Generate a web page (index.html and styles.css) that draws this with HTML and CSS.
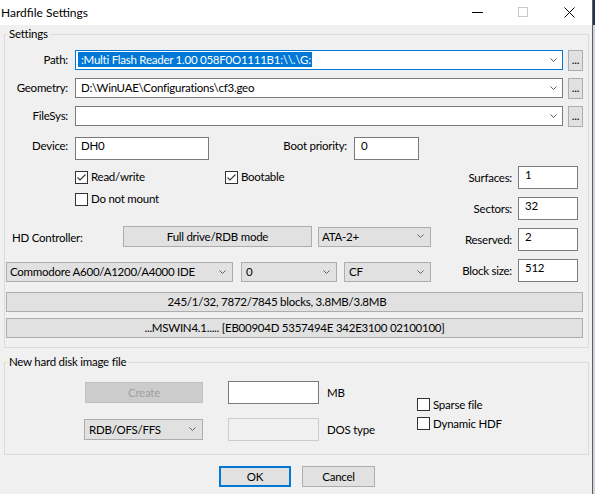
FILE: index.html
```html
<!DOCTYPE html>
<html lang="en">

<head>
  <meta charset="utf-8">
  <title>Hardfile Settings</title>
  <link rel="stylesheet" href="styles.css">
</head>

<body>
  <div class="window">
    <div class="titlebar">
      <span class="title">Hardfile Settings</span>
      <div class="caption">
        <span class="cap">
          <svg width="11" height="11" viewBox="0 0 11 11"><path d="M0 5.5h11" stroke="#000" stroke-width="1" /></svg>
        </span>
        <span class="cap">
          <svg width="11" height="11" viewBox="0 0 11 11"><rect x="0.5" y="0.5" width="9" height="9" fill="none" stroke="#c8c8c8" /></svg>
        </span>
        <span class="cap">
          <svg width="11" height="11" viewBox="0 0 11 11"><path d="M0.5 0.5l10 10M10.5 0.5l-10 10" stroke="#000" stroke-width="1" /></svg>
        </span>
      </div>
    </div>

    <div class="client">
      <!-- Settings -->
      <fieldset class="group group-settings">
        <legend>Settings</legend>

        <div class="row file-row">
          <span class="lbl">Path:</span>
          <div class="combo combo-edit focused">
            <span class="val"><span class="sel">:Multi Flash Reader 1.00 058F0O1111B1:\\.\G:</span></span>
            <svg class="chev" width="7" height="5" viewBox="0 0 7 5"><path d="M0.5 0.5L3.5 3.5L6.5 0.5" fill="none" stroke="#606060" /></svg>
          </div>
          <span class="btn dots">...</span>
        </div>
        <div class="row file-row">
          <span class="lbl">Geometry:</span>
          <div class="combo combo-edit">
            <span class="val">D:\WinUAE\Configurations\cf3.geo</span>
            <svg class="chev" width="7" height="5" viewBox="0 0 7 5"><path d="M0.5 0.5L3.5 3.5L6.5 0.5" fill="none" stroke="#606060" /></svg>
          </div>
          <span class="btn dots">...</span>
        </div>
        <div class="row file-row">
          <span class="lbl">FileSys:</span>
          <div class="combo combo-edit">
            <span class="val"></span>
            <svg class="chev" width="7" height="5" viewBox="0 0 7 5"><path d="M0.5 0.5L3.5 3.5L6.5 0.5" fill="none" stroke="#606060" /></svg>
          </div>
          <span class="btn dots">...</span>
        </div>

        <div class="row device-row">
          <span class="lbl">Device:</span>
          <span class="edit edit-device">DH0</span>
          <span class="lbl lbl-boot">Boot priority:</span>
          <span class="edit edit-boot">0</span>
        </div>

        <div class="middle">
          <div class="left-col">
            <div class="check-row">
              <span class="check check-first"><span class="box on"></span>Read/write</span>
              <span class="check"><span class="box on"></span>Bootable</span>
            </div>
            <div class="check-row">
              <span class="check"><span class="box"></span>Do not mount</span>
            </div>
            <div class="row hd-row">
              <span class="lbl-hd">HD Controller:</span>
              <span class="btn btn-rdb">Full drive/RDB mode</span>
              <div class="combo combo-drop combo-ata">
                <span class="val">ATA-2+</span>
                <svg class="chev" width="7" height="5" viewBox="0 0 7 5"><path d="M0.5 0.5L3.5 3.5L6.5 0.5" fill="none" stroke="#606060" /></svg>
              </div>
            </div>
            <div class="row ctrl-row">
              <div class="combo combo-drop combo-cbm">
                <span class="val">Commodore A600/A1200/A4000 IDE</span>
                <svg class="chev" width="7" height="5" viewBox="0 0 7 5"><path d="M0.5 0.5L3.5 3.5L6.5 0.5" fill="none" stroke="#606060" /></svg>
              </div>
              <div class="combo combo-drop combo-unit">
                <span class="val">0</span>
                <svg class="chev" width="7" height="5" viewBox="0 0 7 5"><path d="M0.5 0.5L3.5 3.5L6.5 0.5" fill="none" stroke="#606060" /></svg>
              </div>
              <div class="combo combo-drop combo-type">
                <span class="val">CF</span>
                <svg class="chev" width="7" height="5" viewBox="0 0 7 5"><path d="M0.5 0.5L3.5 3.5L6.5 0.5" fill="none" stroke="#606060" /></svg>
              </div>
            </div>
          </div>

          <div class="geo-col">
            <span class="lbl-geo">Surfaces:</span><span class="edit">1</span>
            <span class="lbl-geo">Sectors:</span><span class="edit">32</span>
            <span class="lbl-geo">Reserved:</span><span class="edit">2</span>
            <span class="lbl-geo">Block size:</span><span class="edit">512</span>
          </div>
        </div>

        <div class="info info-first">245/1/32, 7872/7845 blocks, 3.8MB/3.8MB</div>
        <div class="info">...MSWIN4.1..... [EB00904D 5357494E 342E3100 02100100]</div>
      </fieldset>

      <!-- New hard disk image file -->
      <fieldset class="group group-new">
        <legend>New hard disk image file</legend>
        <div class="new-grid">
          <span class="btn btn-create">Create</span>
          <span class="edit edit-size"></span>
          <span class="lbl-unit">MB</span>
          <div class="new-checks">
            <span class="check"><span class="box"></span>Sparse file</span>
            <span class="check"><span class="box"></span>Dynamic HDF</span>
          </div>
          <div class="combo combo-drop combo-fs">
            <span class="val">RDB/OFS/FFS</span>
            <svg class="chev" width="7" height="5" viewBox="0 0 7 5"><path d="M0.5 0.5L3.5 3.5L6.5 0.5" fill="none" stroke="#606060" /></svg>
          </div>
          <span class="edit edit-off"></span>
          <span class="lbl-unit">DOS type</span>
        </div>
      </fieldset>

      <div class="actions">
        <span class="btn btn-ok">OK</span>
        <span class="btn btn-cancel">Cancel</span>
      </div>
    </div>
  </div>
</body>

</html>
```

FILE: styles.css
```css
* {
  box-sizing: border-box;
}

body {
  margin: 0;
  background: linear-gradient(#1d3557 0 25px, #cdd4de 25px);
  font-family: Lato, "Noto Sans", sans-serif;
  font-size: 11.5px;
  letter-spacing: -0.25px;
  line-height: 16px;
  color: #000;
}

.window {
  width: 593px;
  height: 494px;
  background: #f0f0f0;
  border-right: 1px solid #5e5e5e;
  overflow: hidden;
}

/* title bar */
.titlebar {
  height: 25px;
  background: #fff;
  display: flex;
  align-items: center;
}

.title {
  flex: 1;
  padding-left: 1px;
  font-size: 12px;
  letter-spacing: 0;
}

.caption {
  display: flex;
  height: 100%;
}

.cap {
  width: 46px;
  display: flex;
  align-items: center;
  justify-content: center;
}

.cap svg {
  display: block;
}

/* client area */
.client {
  padding: 1px 0 0 4px;
}

.group {
  width: 585px;
  margin: 0;
  border: 1px solid #dcdcdc;
  min-width: 0;
}

.group legend {
  margin-left: 2px;
  padding: 0 2px;
  line-height: 16px;
}

.group-settings {
  padding: 8px 0 9px;
}

.row {
  display: flex;
  align-items: center;
}

.lbl {
  width: 63px;
  text-align: right;
  margin-right: 7px;
  flex: none;
}

.file-row {
  height: 20px;
  margin-bottom: 8px;
}

.file-row:nth-of-type(3) {
  margin-bottom: 0;
}

/* combo boxes */
.combo {
  display: flex;
  align-items: center;
  height: 20px;
  border: 1px solid #7a7a7a;
  background: #fff;
  padding-left: 5px;
  white-space: nowrap;
  flex: none;
}

.combo .val {
  flex: 1;
  overflow: hidden;
}

.combo .chev {
  flex: none;
  margin-right: 5px;
}

.combo-edit {
  width: 488px;
}

.focused {
  border-color: #0078d7;
  padding-left: 2px;
}

.sel {
  display: inline-block;
  background: #0078d7;
  color: #fff;
  line-height: 15px;
  padding: 0 1px 0 3px;
}

.combo-drop {
  background: #e1e1e1;
  border-color: #adadad;
  padding-left: 3px;
}

.combo-drop .chev {
  margin-right: 6px;
}

/* buttons */
.btn {
  display: flex;
  align-items: center;
  justify-content: center;
  background: #e1e1e1;
  border: 1px solid #adadad;
  flex: none;
}

.dots {
  width: 15px;
  height: 21px;
  margin-left: 5px;
  align-items: flex-end;
  padding-bottom: 2px;
}

/* edits */
.edit {
  display: block;
  height: 23px;
  border: 1px solid #7a7a7a;
  background: #fff;
  padding: 0 5px;
  line-height: 16px;
  flex: none;
}

.device-row {
  margin-top: 11px;
  align-items: flex-start;
}

.device-row .lbl {
  margin-top: 1px;
}

.edit-device {
  width: 134px;
}

.lbl.lbl-boot {
  width: 138px;
}

.edit-boot {
  width: 65px;
  padding-left: 6px;
}

/* middle block */
.middle {
  display: flex;
  margin-top: 6px;
}

.left-col {
  width: 427px;
}

.check-row {
  display: flex;
  align-items: center;
  height: 22px;
  padding-left: 70px;
}

.check {
  display: flex;
  align-items: center;
  gap: 3px;
}

.check-first {
  width: 150px;
}

.box {
  width: 13px;
  height: 13px;
  border: 1px solid #333;
  background: #fff;
  flex: none;
}

.box.on {
  background: #fff url("data:image/svg+xml,%3Csvg xmlns='http://www.w3.org/2000/svg' width='11' height='11' viewBox='0 0 11 11'%3E%3Cpath d='M1.5 5.5L4 8L9.5 2.5' fill='none' stroke='%23333' stroke-width='1.1'/%3E%3C/svg%3E") no-repeat center;
}

.hd-row {
  margin-top: 16px;
  height: 21px;
}

.lbl-hd {
  width: 118px;
  padding-left: 7px;
  padding-top: 3px;
  flex: none;
}

.btn-rdb {
  width: 189px;
  height: 21px;
  margin-right: 6px;
}

.combo-ata {
  width: 113px;
}

.ctrl-row {
  margin-top: 15px;
  margin-left: 1px;
}

.combo-cbm {
  width: 227px;
  margin-right: 8px;
}

.combo-unit {
  width: 96px;
  padding-left: 4px;
  margin-right: 7px;
}

.combo-type {
  width: 87px;
  padding-left: 4px;
}

.geo-col {
  display: grid;
  grid-template-columns: auto 60px;
  grid-auto-rows: 23px;
  column-gap: 6px;
  row-gap: 8px;
  align-items: center;
  margin-left: auto;
  margin-right: 10px;
}

.lbl-geo {
  text-align: right;
}

.geo-col .edit {
  padding-left: 6px;
}

/* info bars */
.info {
  height: 20px;
  width: 577px;
  margin: 6px 0 0 1px;
  background: #e1e1e1;
  border: 1px solid #adadad;
  text-align: center;
  line-height: 18px;
  white-space: nowrap;
}

.info-first {
  margin-top: 10px;
  padding-right: 35px;
}

/* new hard disk image file */
.group-new {
  margin-top: 6px;
  padding: 11px 0 13px;
}

.new-grid {
  display: grid;
  grid-template-columns: 144px 99px 90px auto;
  grid-template-rows: 23px 23px;
  row-gap: 14px;
  align-items: center;
  justify-items: start;
  padding-left: 79px;
}

.edit-size,
.edit-off {
  width: 91px;
}

.btn-create {
  width: 118px;
  height: 21px;
  margin-left: 1px;
  background: #cccccc;
  border-color: #bfbfbf;
  color: #a0a0a0;
}

.combo-fs {
  width: 119px;
  height: 21px;
  padding-left: 4px;
}

.edit-off {
  background: #f0f0f0;
  border-color: #cccccc;
}

.new-checks {
  grid-column: 4;
  grid-row: 1 / 3;
  align-self: start;
  padding-top: 14px;
  display: flex;
  flex-direction: column;
}

.new-checks .check {
  height: 19px;
}

/* dialog buttons */
.actions {
  display: flex;
  justify-content: center;
  gap: 11px;
  margin-top: 11px;
  padding-right: 2px;
}

.actions .btn {
  height: 21px;
}

.btn-ok {
  width: 72px;
  border-color: #0078d7;
  box-shadow: inset 0 0 0 1px #0078d7;
}

.btn-cancel {
  width: 73px;
}
```
